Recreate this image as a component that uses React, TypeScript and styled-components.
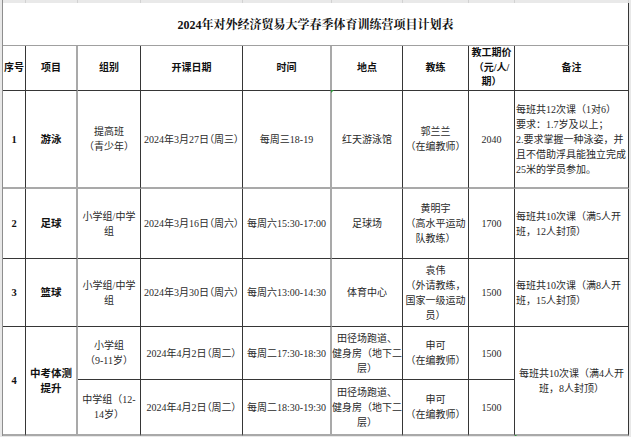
import React from 'react';
import styled, { createGlobalStyle } from 'styled-components';

type Line = 'dark' | 'gray' | 'thick' | 'faint';

const BORDER: Record<Line, string> = {
  dark: '1px solid #363636',
  gray: '1px solid #a0a0a0',
  thick: '2px solid #a9a9a9',
  faint: '1px solid #d2d2d2',
};

interface ColDef {
  w: number;
  right: Line;
  bold?: boolean;
  palt?: boolean;
  align?: 'left' | 'center';
}

const COLS: ColDef[] = [
  { w: 23, right: 'dark', bold: true },
  { w: 52, right: 'thick', bold: true },
  { w: 63, right: 'dark' },
  { w: 102, right: 'dark', palt: true },
  { w: 89, right: 'thick' },
  { w: 71, right: 'dark' },
  { w: 66, right: 'dark' },
  { w: 46, right: 'dark' },
  { w: 114, right: 'dark', align: 'left' },
];

const ROW_HEIGHTS = [3, 43, 45, 98, 70, 68, 53, 56];

const GlobalStyle = createGlobalStyle`
  html, body {
    margin: 0;
    padding: 0;
    background: #e8e8e8;
  }
  body {
    font-family: "Liberation Sans Narrow", "Liberation Serif", "Noto Sans CJK SC", serif;
    color: #222;
  }
`;

const Sheet = styled.div`
  display: grid;
  grid-template-columns: ${COLS.map((c) => `${c.w}px`).join(' ')};
  grid-template-rows: ${ROW_HEIGHTS.map((h) => `${h}px`).join(' ')};
  width: max-content;
  margin-left: 2px;
  border-left: 1px solid #8e8e8e;
  background: #fff;
`;

const StripCell = styled.div`
  box-sizing: border-box;
  background: #e9e9e9;
  border-right: ${BORDER.faint};
`;

const TitleCell = styled.div`
  grid-column: 1 / -1;
  box-sizing: border-box;
  display: flex;
  align-items: center;
  justify-content: center;
  border-right: ${BORDER.dark};
  border-bottom: ${BORDER.gray};
  font-family: "Liberation Serif", "Noto Serif CJK SC", "Noto Sans CJK SC", serif;
  font-size: 12px;
  font-weight: 700;
  color: #111;
`;

const HeadCell = styled.div<{ $right: Line }>`
  box-sizing: border-box;
  display: flex;
  align-items: center;
  justify-content: center;
  text-align: center;
  white-space: pre;
  border-right: ${(p) => BORDER[p.$right]};
  border-bottom: ${BORDER.dark};
  font-size: 10px;
  line-height: 14.5px;
  font-weight: 700;
  color: #111;
`;

const BodyCell = styled.div<{
  $right: Line;
  $bottom: Line;
  $span?: number;
  $bold?: boolean;
  $palt?: boolean;
  $align?: 'left' | 'center';
}>`
  position: relative;
  box-sizing: border-box;
  display: flex;
  align-items: center;
  justify-content: ${(p) => (p.$align === 'left' ? 'flex-start' : 'center')};
  text-align: ${(p) => p.$align ?? 'center'};
  padding-left: ${(p) => (p.$align === 'left' ? '1px' : '0')};
  white-space: pre;
  grid-row: span ${(p) => p.$span ?? 1};
  border-right: ${(p) => BORDER[p.$right]};
  border-bottom: ${(p) => BORDER[p.$bottom]};
  font-size: ${(p) => (p.$bold ? '10.5px' : '10px')};
  line-height: 15px;
  font-weight: ${(p) => (p.$bold ? 700 : 400)};
  color: ${(p) => (p.$bold ? '#111' : '#2a2a2a')};
  font-feature-settings: ${(p) => (p.$palt ? '"palt"' : 'normal')};
`;

const Num = styled.span`
  font-family: "Liberation Serif", "Noto Sans CJK SC", serif;
`;

const Marker = styled.span<{ $bottom?: boolean }>`
  position: absolute;
  left: -1px;
  ${(p) => (p.$bottom ? 'bottom: -4px;' : 'top: -1px;')}
  width: 0;
  height: 0;
  border-top: 3px solid #2f9a3c;
  border-right: 3px solid transparent;
`;

const header = ['序号', '项目', '组别', '开课日期', '时间', '地点', '教练', '教工期价\n（元/人/\n期）', '备注'];

interface RowDef {
  cells: string[];
  bottom: Line;
  marker?: boolean;
}

const mainRows: RowDef[] = [
  {
    cells: [
      '1',
      '游泳',
      '提高班\n（青少年）',
      '2024年3月27日（周三）',
      '每周三18-19',
      '红天游泳馆',
      '郭兰兰\n（在编教师）',
      '2040',
      '每班共12次课（1对6）\n要求：1.7岁及以上；\n2.要求掌握一种泳姿，并\n且不借助浮具能独立完成\n25米的学员参加。',
    ],
    bottom: 'thick',
    marker: true,
  },
  {
    cells: [
      '2',
      '足球',
      '小学组/中学\n组',
      '2024年3月16日（周六）',
      '每周六15:30-17:00',
      '足球场',
      '黄明宇\n（高水平运动\n队教练）',
      '1700',
      '每班共10次课（满5人开\n班，12人封顶）',
    ],
    bottom: 'dark',
  },
  {
    cells: [
      '3',
      '篮球',
      '小学组/中学\n组',
      '2024年3月30日（周六）',
      '每周六13:00-14:30',
      '体育中心',
      '袁伟\n（外请教练，\n国家一级运动\n员）',
      '1500',
      '每班共10次课（满8人开\n班，15人封顶）',
    ],
    bottom: 'dark',
  },
];

const examSubRows: { cells: string[]; bottom: Line }[] = [
  {
    cells: [
      '小学组\n（9-11岁）',
      '2024年4月2日（周二）',
      '每周二17:30-18:30',
      '田径场跑道、\n健身房（地下二\n层）',
      '申可\n（在编教师）',
      '1500',
    ],
    bottom: 'dark',
  },
  {
    cells: [
      '中学组（12-\n14岁）',
      '2024年4月2日（周二）',
      '每周二18:30-19:30',
      '田径场跑道、\n健身房（地下二\n层）',
      '申可\n（在编教师）',
      '1500',
    ],
    bottom: 'thick',
  },
];

const renderCell = (
  text: string,
  col: number,
  bottom: Line,
  key: string,
  extra?: React.ReactNode,
  span?: number,
  alignOverride?: 'left' | 'center'
) => {
  const c = COLS[col];
  return (
    <BodyCell
      key={key}
      $right={c.right}
      $bottom={bottom}
      $span={span}
      $bold={c.bold}
      $palt={c.palt}
      $align={alignOverride ?? c.align}
    >
      {extra}
      {col === 0 ? <Num>{text}</Num> : text}
    </BodyCell>
  );
};

export default function App() {
  return (
    <>
      <GlobalStyle />
      <Sheet>
        {COLS.map((_, i) => (
          <StripCell key={`s${i}`} />
        ))}
        <TitleCell>2024年对外经济贸易大学春季体育训练营项目计划表</TitleCell>
        {header.map((h, i) => (
          <HeadCell key={`h${i}`} $right={COLS[i].right}>
            {h}
          </HeadCell>
        ))}
        {mainRows.map((row, r) =>
          row.cells.map((text, i) =>
            renderCell(text, i, row.bottom, `r${r}c${i}`, row.marker && i === 5 ? <Marker /> : undefined)
          )
        )}
        {renderCell('4', 0, 'thick', 'e0', undefined, 2)}
        {renderCell('中考体测\n提升', 1, 'thick', 'e1', undefined, 2)}
        {examSubRows[0].cells.map((text, i) => renderCell(text, i + 2, examSubRows[0].bottom, `ea${i}`))}
        {renderCell('每班共10次课（满4人开\n班，8人封顶）', 8, 'thick', 'e8', <Marker $bottom />, 2, 'center')}
        {examSubRows[1].cells.map((text, i) => renderCell(text, i + 2, examSubRows[1].bottom, `eb${i}`))}
      </Sheet>
    </>
  );
}
